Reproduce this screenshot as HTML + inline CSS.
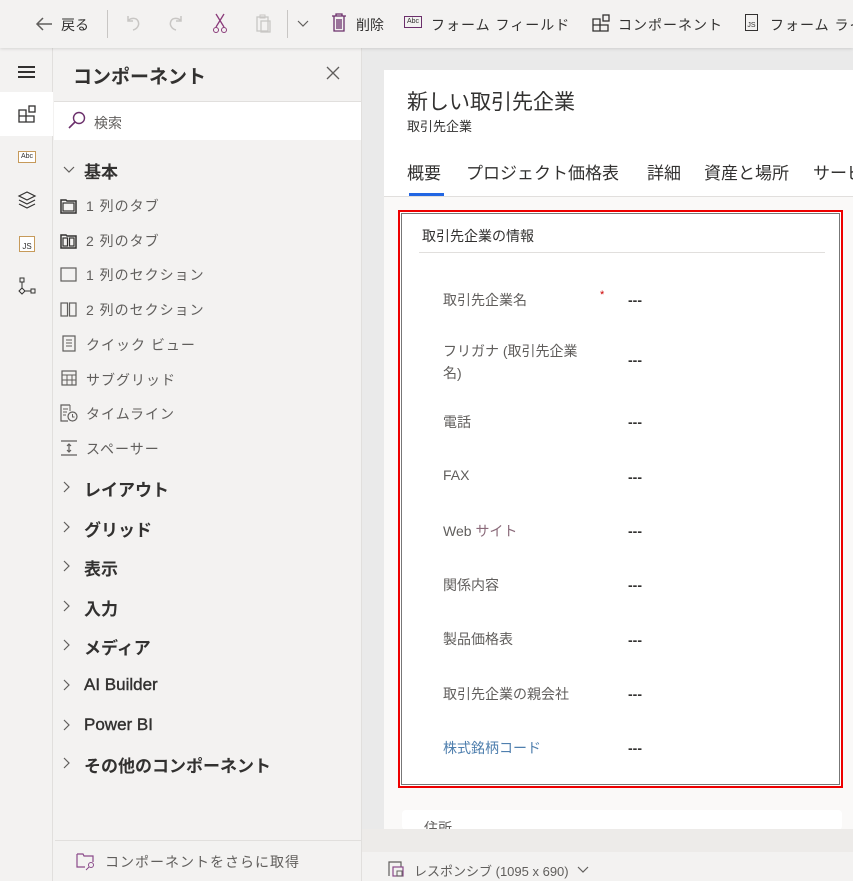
<!DOCTYPE html>
<html><head><meta charset="utf-8"><style>
*{box-sizing:border-box;margin:0;padding:0}
body{width:853px;height:881px;overflow:hidden;font-family:"Liberation Sans","Noto Sans CJK JP",sans-serif;background:#f3f2f1;position:relative;color:#323130}
.a{position:absolute}
.tb{top:0;left:0;width:853px;height:48px;background:#f3f2f1;box-shadow:0 1px 3px rgba(0,0,0,.12);z-index:2;overflow:hidden}
.tb span{position:absolute;top:15px;font-size:14px;color:#323130;white-space:nowrap}
.rail{top:48px;left:0;width:53px;height:833px;background:#f3f2f1;border-right:1px solid #e1dfdd}
.panel{top:48px;left:54px;width:308px;height:833px;background:#f3f2f1;border-right:1px solid #e1dfdd}
.item{position:absolute;left:86px;font-size:14px;color:#605e5c;letter-spacing:1px}
.grp{position:absolute;left:84px;font-size:17px;font-weight:bold;color:#323130}
.chev{position:absolute;left:63px}
.canvas{top:48px;left:362px;width:491px;height:781px;background:#eaeaea;overflow:hidden}
.lbl{position:absolute;left:443px;font-size:14px;color:#605e5c}
.val{position:absolute;left:628px;font-size:14px;font-weight:bold;color:#323130}
svg{position:absolute;overflow:visible}
</style></head><body>
<div class="a tb">
<svg style="left:34px;top:14px" width="20" height="20" viewBox="0 0 20 20"><path d="M18 10H3M9 4L3 10l6 6" fill="none" stroke="#605e5c" stroke-width="1.5"/></svg><span style="left:61px">戻る</span>
<div class="a" style="left:107px;top:10px;width:1px;height:28px;background:#c8c6c4"></div>
<svg style="left:124px;top:13px" width="18" height="20" viewBox="0 0 18 20"><path d="M4 3v5h5M4 8c2-3 8-4 10 0 2 4-1 8-5 9" fill="none" stroke="#c8c6c4" stroke-width="1.5"/></svg>
<svg style="left:167px;top:13px" width="18" height="20" viewBox="0 0 18 20"><path d="M14 3v5H9M14 8c-2-3-8-4-10 0-2 4 1 8 5 9" fill="none" stroke="#c8c6c4" stroke-width="1.5"/></svg>
<svg style="left:212px;top:12px" width="16" height="22" viewBox="0 0 16 22"><path d="M4 2l8 13M12 2L4 15" stroke="#8a3b7a" stroke-width="1.3" fill="none"/><circle cx="4" cy="18" r="2.5" fill="none" stroke="#8a3b7a"/><circle cx="12" cy="18" r="2.5" fill="none" stroke="#8a3b7a"/></svg>
<svg style="left:256px;top:13px" width="16" height="20" viewBox="0 0 16 20"><rect x="1" y="4" width="11" height="14" fill="none" stroke="#c8c6c4" stroke-width="1.3"/><rect x="5" y="8" width="9" height="11" fill="none" stroke="#c8c6c4" stroke-width="1.3"/><rect x="4" y="2" width="5" height="3" fill="none" stroke="#c8c6c4"/></svg>
<div class="a" style="left:287px;top:10px;width:1px;height:28px;background:#c8c6c4"></div>
<svg style="left:297px;top:20px" width="12" height="8" viewBox="0 0 12 8"><path d="M1 1l5 5 5-5" fill="none" stroke="#605e5c" stroke-width="1.2"/></svg>
<svg style="left:331px;top:13px" width="16" height="20" viewBox="0 0 16 20"><path d="M1 3h14M5 3V1h6v2M3 3v15h10V3M6 6v10M8 6v10M10 6v10" fill="none" stroke="#6b2f6b" stroke-width="1.3"/></svg>
<span style="left:356px">削除</span>
<div class="a" style="left:404px;top:16px;width:18px;height:12px;border:1px solid #6b2f6b;font-size:7px;line-height:10px;text-align:center">Abc</div>
<span style="left:431px;letter-spacing:1px">フォーム フィールド</span>
<svg style="left:592px;top:14px" width="18" height="18" viewBox="0 0 18 18"><path d="M1 5h7v12H1zM8 11h8v6H8M1 11h7" fill="none" stroke="#323130" stroke-width="1.3"/><rect x="11" y="1" width="6" height="6" fill="none" stroke="#323130" stroke-width="1.3"/></svg>
<span style="left:618px;letter-spacing:1px">コンポーネント</span>
<div class="a" style="left:745px;top:14px;width:13px;height:17px;border:1px solid #323130;font-size:7px;line-height:22px;text-align:center">JS</div>
<span style="left:770px;letter-spacing:1px">フォーム ライブラリ</span>
</div>
<div class="a rail">
<div class="a" style="left:18px;top:18px;width:17px;height:1.5px;background:#323130;box-shadow:0 5px 0 #323130,0 10px 0 #323130"></div>
<div class="a" style="left:0;top:44px;width:53px;height:44px;background:#fff"></div>
<svg style="left:18px;top:57px" width="18" height="18" viewBox="0 0 18 18"><path d="M1 5h7v12H1zM8 11h8v6H8M1 11h7" fill="none" stroke="#323130" stroke-width="1.3"/><rect x="11" y="1" width="6" height="6" fill="none" stroke="#323130" stroke-width="1.3"/></svg>
<div class="a" style="left:18px;top:103px;width:18px;height:12px;border:1px solid #c69a5a;font-size:7px;line-height:10px;text-align:center;background:#fff">Abc</div>
<svg style="left:17px;top:143px" width="20" height="18" viewBox="0 0 20 18"><path d="M10 1l8 4-8 4-8-4zM2 9l8 4 8-4M2 13l8 4 8-4" fill="none" stroke="#323130" stroke-width="1.2"/></svg>
<div class="a" style="left:19px;top:188px;width:16px;height:16px;border:1px solid #c69a5a;font-size:8px;line-height:20px;text-align:center;background:#fff">JS</div>
<svg style="left:18px;top:229px" width="20" height="20" viewBox="0 0 20 20"><rect x="2" y="1" width="4" height="4" fill="none" stroke="#323130"/><path d="M4 5v6" stroke="#323130"/><path d="M4 11l3 3-3 3-3-3z" fill="none" stroke="#323130"/><path d="M7 14h6" stroke="#323130"/><rect x="13" y="12" width="4" height="4" fill="none" stroke="#323130"/></svg>
</div>
<div class="a panel">
<div class="a" style="left:19px;top:14px;font-size:19px;font-weight:bold">コンポーネント</div>
<svg style="left:272px;top:18px" width="14" height="14" viewBox="0 0 14 14"><path d="M1 1l12 12M13 1L1 13" stroke="#605e5c" stroke-width="1.3"/></svg>
<div class="a" style="left:0;top:53px;width:307px;height:39px;background:#fff;border-top:1px solid #e1dfdd"></div>
<svg style="left:14px;top:63px" width="18" height="18" viewBox="0 0 18 18"><circle cx="11" cy="7" r="5.5" fill="none" stroke="#6b2f6b" stroke-width="1.4"/><path d="M7 11l-6 6" stroke="#6b2f6b" stroke-width="1.6"/></svg>
<div class="a" style="left:40px;top:65px;font-size:14px;color:#605e5c">検索</div>
</div>
<svg class="chev" style="top:166px" width="12" height="8" viewBox="0 0 12 8"><path d="M1 1l5 5 5-5" fill="none" stroke="#605e5c" stroke-width="1.2"/></svg><div class="grp" style="top:158px">基本</div>
<svg style="left:60px;top:197px" width="17" height="17" viewBox="0 0 17 17"><path d="M1 3h5l1 1h9v12H1z" fill="none" stroke="#323130" stroke-width="1.5"/><rect x="3" y="6" width="11" height="8" fill="none" stroke="#323130" stroke-width="1.2"/></svg><div class="item" style="top:196px">1 列のタブ</div>
<svg style="left:60px;top:232px" width="17" height="17" viewBox="0 0 17 17"><path d="M1 3h5l1 1h9v12H1z" fill="none" stroke="#323130" stroke-width="1.5"/><rect x="3" y="6" width="4.5" height="8" fill="none" stroke="#323130" stroke-width="1.2"/><rect x="9.5" y="6" width="4.5" height="8" fill="none" stroke="#323130" stroke-width="1.2"/></svg><div class="item" style="top:231px">2 列のタブ</div>
<svg style="left:60px;top:267px" width="17" height="15" viewBox="0 0 17 15"><rect x="1" y="1" width="15" height="13" fill="none" stroke="#605e5c" stroke-width="1.2"/></svg><div class="item" style="top:265px">1 列のセクション</div>
<svg style="left:60px;top:302px" width="17" height="15" viewBox="0 0 17 15"><rect x="1" y="1" width="6.5" height="13" fill="none" stroke="#605e5c" stroke-width="1.2"/><rect x="9.5" y="1" width="6.5" height="13" fill="none" stroke="#605e5c" stroke-width="1.2"/></svg><div class="item" style="top:300px">2 列のセクション</div>
<svg style="left:62px;top:335px" width="14" height="17" viewBox="0 0 14 17"><rect x="1" y="1" width="12" height="15" fill="none" stroke="#605e5c" stroke-width="1.2"/><path d="M4 5h6M4 8h6M4 11h6" stroke="#605e5c"/></svg><div class="item" style="top:335px">クイック ビュー</div>
<svg style="left:61px;top:370px" width="16" height="16" viewBox="0 0 16 16"><rect x="1" y="1" width="14" height="14" fill="none" stroke="#605e5c" stroke-width="1.2"/><path d="M1 5h14M1 10h14M6 5v10M11 5v10" stroke="#605e5c"/></svg><div class="item" style="top:370px">サブグリッド</div>
<svg style="left:60px;top:404px" width="18" height="18" viewBox="0 0 18 18"><path d="M10 1H1v16h7" fill="none" stroke="#605e5c" stroke-width="1.2"/><path d="M10 1v6" stroke="#605e5c"/><path d="M3 5h5M3 8h4M3 11h3" stroke="#605e5c"/><circle cx="12.5" cy="12.5" r="4.5" fill="none" stroke="#605e5c" stroke-width="1.2"/><path d="M12.5 10v3h2" fill="none" stroke="#605e5c"/></svg><div class="item" style="top:404px">タイムライン</div>
<svg style="left:60px;top:440px" width="18" height="16" viewBox="0 0 18 16"><path d="M1 1h16M1 15h16M9 4v8M7 6l2-2 2 2M7 10l2 2 2-2" fill="none" stroke="#605e5c" stroke-width="1.2"/></svg><div class="item" style="top:439px">スペーサー</div>
<svg class="chev" style="top:481px" width="8" height="12" viewBox="0 0 8 12"><path d="M1 1l5 5-5 5" fill="none" stroke="#605e5c" stroke-width="1.2"/></svg><div class="grp" style="top:476px">レイアウト</div>
<svg class="chev" style="top:521px" width="8" height="12" viewBox="0 0 8 12"><path d="M1 1l5 5-5 5" fill="none" stroke="#605e5c" stroke-width="1.2"/></svg><div class="grp" style="top:516px">グリッド</div>
<svg class="chev" style="top:560px" width="8" height="12" viewBox="0 0 8 12"><path d="M1 1l5 5-5 5" fill="none" stroke="#605e5c" stroke-width="1.2"/></svg><div class="grp" style="top:555px">表示</div>
<svg class="chev" style="top:600px" width="8" height="12" viewBox="0 0 8 12"><path d="M1 1l5 5-5 5" fill="none" stroke="#605e5c" stroke-width="1.2"/></svg><div class="grp" style="top:595px">入力</div>
<svg class="chev" style="top:639px" width="8" height="12" viewBox="0 0 8 12"><path d="M1 1l5 5-5 5" fill="none" stroke="#605e5c" stroke-width="1.2"/></svg><div class="grp" style="top:634px">メディア</div>
<svg class="chev" style="top:679px" width="8" height="12" viewBox="0 0 8 12"><path d="M1 1l5 5-5 5" fill="none" stroke="#605e5c" stroke-width="1.2"/></svg><div class="grp" style="top:675px;font-weight:normal;-webkit-text-stroke:.4px #323130">AI Builder</div>
<svg class="chev" style="top:719px" width="8" height="12" viewBox="0 0 8 12"><path d="M1 1l5 5-5 5" fill="none" stroke="#605e5c" stroke-width="1.2"/></svg><div class="grp" style="top:715px;font-weight:normal;-webkit-text-stroke:.4px #323130">Power BI</div>
<svg class="chev" style="top:757px" width="8" height="12" viewBox="0 0 8 12"><path d="M1 1l5 5-5 5" fill="none" stroke="#605e5c" stroke-width="1.2"/></svg><div class="grp" style="top:752px">その他のコンポーネント</div>
<div class="a" style="left:55px;top:840px;width:306px;height:1px;background:#e1dfdd"></div>
<svg style="left:76px;top:852px" width="20" height="18" viewBox="0 0 20 18"><path d="M1 2h6l1 2h9v6M1 2v13h8" fill="none" stroke="#8a4a8a" stroke-width="1.2"/><circle cx="15" cy="13" r="2.5" fill="none" stroke="#8a4a8a"/><path d="M13 15l-3 3" stroke="#8a4a8a"/></svg>
<div class="a" style="left:105px;top:852px;font-size:14px;color:#605e5c;letter-spacing:1px">コンポーネントをさらに取得</div>
<div class="a canvas">
<div class="a" style="left:22px;top:22px;width:469px;height:759px;background:#faf9f8"></div>
<div class="a" style="left:22px;top:22px;width:469px;height:127px;background:#fff;border-bottom:1px solid #e1dfdd"></div>
<div class="a" style="left:45px;top:38px;font-size:21px;color:#323130">新しい取引先企業</div>
<div class="a" style="left:45px;top:68px;font-size:13px;color:#323130">取引先企業</div>
<div class="a" style="left:45px;top:111px;font-size:17px;white-space:nowrap">概要</div>
<div class="a" style="left:104px;top:111px;font-size:17px;white-space:nowrap">プロジェクト価格表</div>
<div class="a" style="left:285px;top:111px;font-size:17px">詳細</div>
<div class="a" style="left:342px;top:111px;font-size:17px">資産と場所</div>
<div class="a" style="left:451px;top:111px;font-size:17px;white-space:nowrap">サービス</div>
<div class="a" style="left:47px;top:145px;width:35px;height:3px;background:#2266e3"></div>
<div class="a" style="left:36px;top:162px;width:445px;height:578px;border:2px solid #e00;background:#fff"><div style="position:absolute;inset:1px;border:1px solid #777"></div></div>
<div class="a" style="left:40px;top:762px;width:440px;height:20px;background:#fff;border-radius:4px"></div>
<div class="a" style="left:62px;top:770px;font-size:14px;color:#605e5c">住所</div>
</div>
<div class="a" style="left:422px;top:226px;font-size:14px;color:#323130">取引先企業の情報</div>
<div class="a" style="left:419px;top:252px;width:406px;height:1px;background:#e1dfdd"></div>
<div class="lbl" style="top:290px">取引先企業名</div><div class="a" style="left:600px;top:289px;color:#c00;font-size:11px">*</div><div class="val" style="top:292px">---</div>
<div class="lbl" style="top:340px;line-height:22px">フリガナ (取引先企業<br>名)</div><div class="val" style="top:352px">---</div>
<div class="lbl" style="top:412px">電話</div><div class="val" style="top:414px">---</div>
<div class="lbl" style="top:467px">FAX</div><div class="val" style="top:469px">---</div>
<div class="lbl" style="top:521px">Web <span style="color:#8a6a7a">サイト</span></div><div class="val" style="top:523px">---</div>
<div class="lbl" style="top:575px">関係内容</div><div class="val" style="top:577px">---</div>
<div class="lbl" style="top:629px">製品価格表</div><div class="val" style="top:632px">---</div>
<div class="lbl" style="top:684px">取引先企業の親会社</div><div class="val" style="top:686px">---</div>
<div class="lbl" style="top:738px;color:#4f7fae">株式銘柄コード</div><div class="val" style="top:740px">---</div>
<div class="a" style="left:362px;top:829px;width:491px;height:23px;background:#edebe9"></div>
<div class="a" style="left:362px;top:852px;width:491px;height:29px;background:#f3f2f1"></div>
<svg style="left:388px;top:861px" width="16" height="16" viewBox="0 0 16 16"><path d="M1 15V1h12v5" fill="none" stroke="#605e5c" stroke-width="1.2"/><rect x="5" y="6" width="10" height="9" fill="none" stroke="#8a4a8a" stroke-width="1.2"/><rect x="9" y="10" width="5" height="5" fill="none" stroke="#605e5c"/></svg>
<div class="a" style="left:414px;top:861px;font-size:13px;color:#605e5c">レスポンシブ (1095 x 690)</div>
<svg style="left:577px;top:866px" width="12" height="8" viewBox="0 0 12 8"><path d="M1 1l5 5 5-5" fill="none" stroke="#605e5c" stroke-width="1.2"/></svg>
</body></html>
